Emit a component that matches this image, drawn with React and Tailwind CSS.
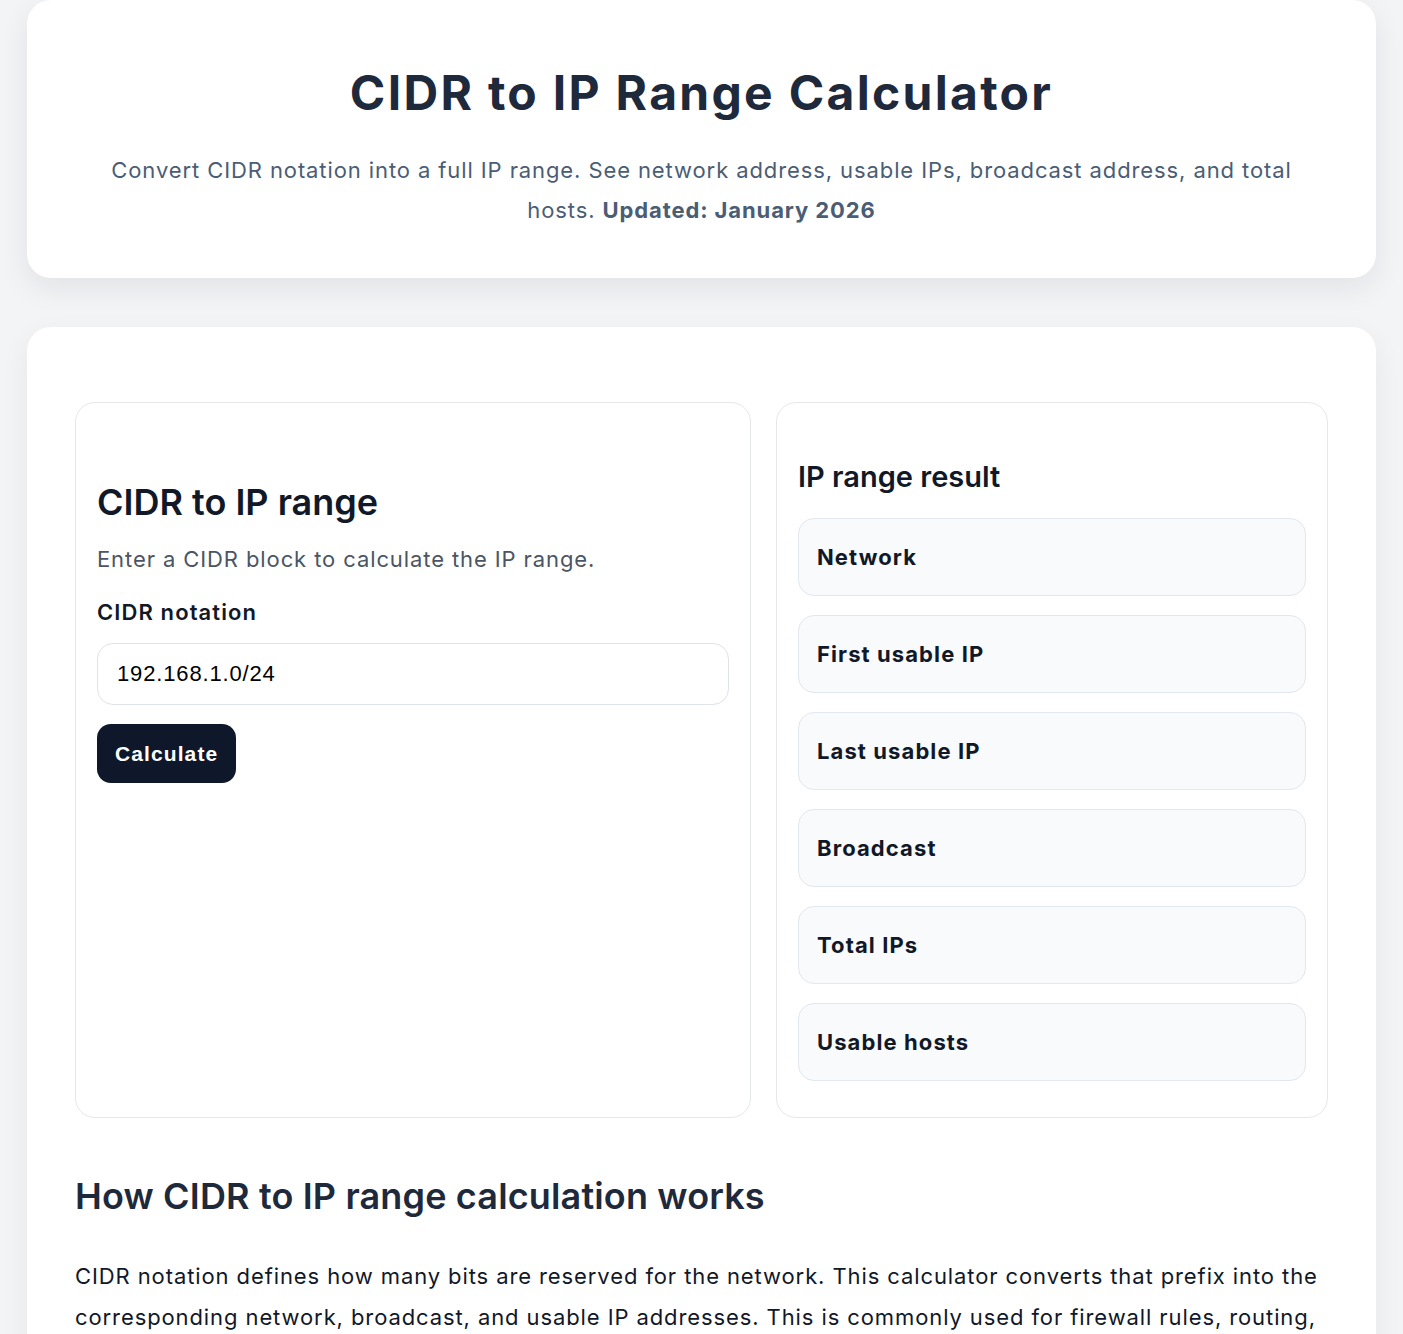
import React, { useState } from 'react';

const results = ['Network', 'First usable IP', 'Last usable IP', 'Broadcast', 'Total IPs', 'Usable hosts'];

const App = () => {
    const [cidr, setCidr] = useState('192.168.1.0/24');

    return (
        <div className="min-h-screen bg-[#f3f4f6] px-[27px] pb-12 font-['Inter',sans-serif]">
            {/* Header */}
            <header className="bg-white rounded-[24px] shadow-[0_10px_30px_rgba(15,23,42,0.08)] px-12 pt-[64px] pb-[48px] text-center">
                <h1 className="text-[48px] leading-[58px] font-bold tracking-[2.3px] text-[#1e293b]">
                    CIDR to IP Range Calculator
                </h1>
                <p className="mt-[28px] mx-auto max-w-[1210px] text-[22px] leading-[40px] tracking-[0.9px] text-[#4a5d75]">
                    Convert CIDR notation into a full IP range. See network address, usable IPs, broadcast address, and total hosts.{' '}
                    <strong className="font-bold">Updated: January 2026</strong>
                </p>
            </header>

            {/* Main */}
            <main className="mt-[49px] bg-white rounded-[24px] shadow-[0_10px_30px_rgba(15,23,42,0.06)] px-12 pt-[75px] pb-12">
                <div className="grid grid-cols-[676px_552px] gap-[25px]">
                    {/* Input card */}
                    <section className="border border-[#e5e7eb] rounded-[20px] px-[21px] pt-[78px] pb-[22px]">
                        <h2 className="text-[36px] leading-[43px] font-semibold text-[#111827]">CIDR to IP range</h2>
                        <p className="mt-[19px] text-[22px] leading-[33px] tracking-[0.9px] text-[#4b5563]">
                            Enter a CIDR block to calculate the IP range.
                        </p>
                        <label className="block mt-[20px] text-[22px] leading-[33px] font-semibold tracking-[1.1px] text-[#111827]">
                            CIDR notation
                        </label>
                        <input
                            value={cidr}
                            onChange={(e) => setCidr(e.target.value)}
                            className="mt-[14px] block w-full h-[62px] border border-[#dfe3ea] rounded-[16px] px-[19px] text-[22px] tracking-[0.85px] text-black font-['Liberation_Sans',Arial,sans-serif] outline-none"
                        />
                        <button className="mt-[19px] h-[59px] px-[18px] rounded-[14px] bg-[#0f172a] text-white text-[21px] font-bold tracking-[1.1px] font-['Liberation_Sans',Arial,sans-serif]">
                            Calculate
                        </button>
                    </section>

                    {/* Result card */}
                    <section className="border border-[#e5e7eb] rounded-[20px] px-[21px] pt-[57px] pb-[36px]">
                        <h2 className="text-[29px] leading-[34px] font-semibold text-[#111827]">IP range result</h2>
                        <div className="mt-[24px] flex flex-col gap-[19px]">
                            {results.map((label) => (
                                <div
                                    key={label}
                                    className="h-[78px] flex items-center px-[18px] bg-[#f8fafc] border border-[#e2e8f0] rounded-[16px]"
                                >
                                    <span className="text-[22px] font-bold tracking-[1.1px] text-[#111827]">{label}</span>
                                </div>
                            ))}
                        </div>
                    </section>
                </div>

                {/* Explanation */}
                <h2 className="mt-[57px] text-[36px] leading-[43px] font-semibold tracking-[0.15px] text-[#1e293b]">
                    How CIDR to IP range calculation works
                </h2>
                <p className="mt-[38px] text-[22px] leading-[41px] tracking-[0.9px] text-[#111827]">
                    CIDR notation defines how many bits are reserved for the network. This calculator converts that prefix into the corresponding network, broadcast, and usable IP addresses. This is commonly used for firewall rules, routing, subnet planning, and cloud network configuration.
                </p>
            </main>
        </div>
    );
};

export default App;
